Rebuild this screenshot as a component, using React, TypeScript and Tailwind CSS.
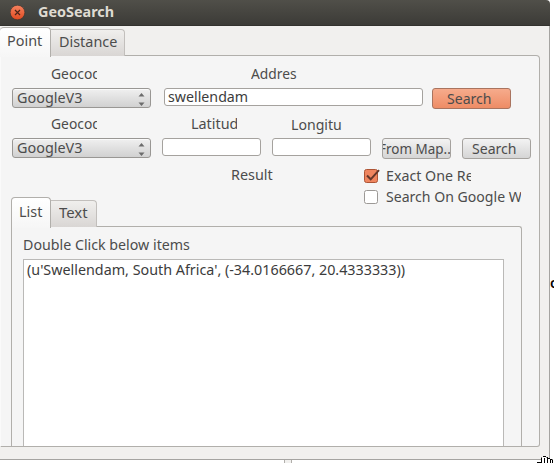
import { useLayoutEffect, useRef, useState, type ReactNode } from "react";

/** Single line of text condensed or stretched to a fixed advance width. */
function Label({ children, width, className = "" }: { children: string; width: number; className?: string }) {
  const ref = useRef<HTMLSpanElement>(null);
  const [scale, setScale] = useState(1);
  useLayoutEffect(() => {
    if (ref.current) setScale(width / ref.current.offsetWidth);
  }, [width]);
  return (
    <div className={`h-5 shrink-0 overflow-hidden whitespace-nowrap text-left leading-5 ${className}`}>
      <span ref={ref} className="inline-block origin-left" style={{ transform: `scaleX(${scale})` }}>
        {children}
      </span>
    </div>
  );
}

function Combo() {
  return (
    <div className="flex h-[20px] w-[139px] shrink-0 items-center justify-between rounded-[3px] border border-[#999794] bg-linear-to-b from-[#f0f0f0] to-[#d1d1d1] pr-[5px] pl-1 shadow-[inset_0_1px_0_#fafafa]">
      <Label width={65} className="w-[68px]">GoogleV3</Label>
      <svg width="7" height="13" viewBox="0 0 7 13" className="mt-[3px] fill-[#6c6c6c]">
        <path d="M3.5 0 6.5 3.5H.5zM.5 9.5h6l-3 3.5z" />
      </svg>
    </div>
  );
}

function Field({ className, children }: { className: string; children?: ReactNode }) {
  return (
    <div className={`flex h-[18px] shrink-0 items-center rounded-[3px] border border-[#a5a29e] bg-white pl-[3px] text-[#3c3c3c] ${className}`}>
      {children}
    </div>
  );
}

function Button({ className, children }: { className: string; children: ReactNode }) {
  return (
    <div className={`flex h-[21px] shrink-0 items-center overflow-hidden rounded-[3px] border bg-linear-to-b ${className}`}>
      {children}
    </div>
  );
}

export default function App() {
  return (
    <div className="flex h-[463px] w-[554px] overflow-hidden bg-white font-['Noto_Sans','Open_Sans',sans-serif] text-[14.4px] text-[#4c4c4c]">
      <div className="flex w-[550px] flex-col">
        <header className="flex h-[26px] shrink-0 items-center rounded-tr-[4px] border-b border-[#33322e] bg-linear-to-b from-[#504f49] to-[#3c3b37] pl-[10px]">
          <svg width="16" height="16" viewBox="0 0 16 16" className="mt-px">
            <defs>
              <linearGradient id="close" x2="0" y2="1">
                <stop stopColor="#f68360" />
                <stop offset="1" stopColor="#df4a20" />
              </linearGradient>
            </defs>
            <circle cx="7.5" cy="7.5" r="7.3" fill="url(#close)" stroke="#33302c" strokeWidth=".6" />
            <path d="m5 5 5 5m0-5-5 5" stroke="#4b2418" strokeWidth="1.2" />
          </svg>
          <Label width={76} className="-mt-px ml-3 w-20 font-bold text-[#dfdbd2]">GeoSearch</Label>
        </header>

        <main className="flex h-[434px] shrink-0 flex-col border-r border-b border-[#a5a4a1] bg-[#f1f0ee]">
          <nav className="z-10 flex h-[30px] shrink-0 items-end">
            <div className="-mb-px h-[30px] w-[51px] rounded-t-[4px] border-t border-r border-[#b1afab] bg-linear-to-b from-white to-[#f6f6f6] pt-[3px] pl-[7px]">
              <Label width={35} className="w-9">Point</Label>
            </div>
            <div className="h-[27px] w-[74px] rounded-tr-[4px] border-t border-r border-[#c2bfbc] bg-linear-to-b from-[#f0efed] to-[#d9d6d4] pt-[2px] pl-2">
              <Label width={58} className="w-[60px]">Distance</Label>
            </div>
          </nav>

          <section className="-mt-px flex h-[392px] w-[540px] shrink-0 flex-col overflow-hidden rounded-tr-[4px] rounded-br-[3px] border-t border-r border-b border-l border-[#b1afab] border-l-[#fafafa] bg-[#f5f5f5] pl-[10px]">
            <div className="flex h-8 shrink-0 pt-2 pl-10">
              <Label width={50} className="w-[46px]">Geocod</Label>
              <Label width={46} className="ml-[154px] w-[46px]">Addres</Label>
            </div>
            <div className="flex h-[27px] shrink-0 items-start pl-px">
              <Combo />
              <Field className="ml-[13px] w-[259px]">
                <Label width={80} className="w-[84px]">swellendam</Label>
              </Field>
              <Button className="ml-[9px] w-[79px] border-[#a9745f] from-[#f6ab8c] to-[#ee8c65] pl-[14px]">
                <Label width={45} className="w-[46px]">Search</Label>
              </Button>
            </div>
            <div className="flex h-[23px] shrink-0 pl-10">
              <Label width={50} className="-mt-px w-[46px]">Geocod</Label>
              <Label width={47} className="-mt-px ml-[94px] w-[46px]">Latitud</Label>
              <Label width={51} className="ml-[54px] w-[51px]">Longitu</Label>
            </div>
            <div className="flex h-[27px] shrink-0 items-start pl-px">
              <Combo />
              <Field className="ml-[11px] w-[99px]" />
              <Field className="ml-[11px] w-[99px]" />
              <Button className="ml-[11px] w-[69px] border-[#a5a29e] from-[#f3f3f3] to-[#d5d5d5]">
                <Label width={72} className="-ml-1 w-[75px]">From Map..</Label>
              </Button>
              <Button className="ml-[11px] w-[69px] border-[#a5a29e] from-[#f3f3f3] to-[#d5d5d5] pl-[9px]">
                <Label width={45} className="w-[46px]">Search</Label>
              </Button>
            </div>

            <div className="flex h-8 shrink-0">
              <Label width={42} className="ml-[220px] w-[43px]">Result</Label>
              <div className="ml-[90px] flex flex-col gap-px pt-px">
                <div className="flex h-5 items-center">
                  <svg width="16" height="15" viewBox="0 0 16 15">
                    <rect x=".5" y=".5" width="13" height="13" rx="2" fill="#ef855f" stroke="#ad5435" />
                    <path d="m3 6.5 3.7 3.8L15 1.2" fill="none" stroke="#65372a" strokeWidth="2" />
                  </svg>
                  <Label width={94} className="ml-[6px] w-[85px]">Exact One Res</Label>
                </div>
                <div className="flex h-5 items-center">
                  <svg width="16" height="15" viewBox="0 0 16 15">
                    <rect x=".5" y=".5" width="13" height="13" rx="2" fill="#fff" stroke="#9c9996" />
                  </svg>
                  <Label width={136} className="ml-[6px] w-[135px]">Search On Google W</Label>
                </div>
              </div>
            </div>

            <nav className="z-10 -mt-px flex h-[31px] shrink-0 items-end">
              <div className="-mb-px h-[31px] w-[40px] rounded-t-[4px] border-t border-r border-l border-[#b1afab] bg-linear-to-b from-white to-[#f6f6f6] pt-[4px] pl-[7px]">
                <Label width={23} className="w-6">List</Label>
              </div>
              <div className="h-[27px] w-[46px] rounded-tr-[4px] border-t border-r border-[#c2bfbc] bg-linear-to-b from-[#f0efed] to-[#d9d6d4] pt-[2px] pl-2">
                <Label width={29} className="w-[30px]">Text</Label>
              </div>
            </nav>
            <section className="-mt-px flex min-h-0 w-[511px] flex-1 flex-col rounded-tr-[3px] border-t border-r border-l border-[#b1afab] pl-[11px]">
              <Label width={167} className="mt-[8px] w-[170px]">Double Click below items</Label>
              <div className="mt-1 w-[481px] flex-1 border-t border-r border-l border-[#bab9b7] bg-white pl-[3px] text-[#3c3c3c]">
                <Label width={378} className="w-[382px]">(u'Swellendam, South Africa', (-34.0166667, 20.4333333))</Label>
              </div>
            </section>
          </section>
        </main>
        <div className="ml-[284px] h-[3px] w-2 border-x border-[#b1afab] bg-[#f1f0ee]" />
      </div>

      {/* Edge of the underlying map, with the hand pointer */}
      <aside className="relative w-1 bg-white">
        <span className="absolute top-[273px] left-0 w-1 overflow-hidden text-[14px] leading-5 font-semibold text-black">o</span>
        <svg className="absolute top-[456px] -left-[13px]" width="17" height="7" viewBox="0 0 17 7">
          <path d="M4.5 7V1.5H6v-1h3v1h2v1h2v1h2V7z" fill="#fff" />
          <path d="M0 6.5h4M4.5 7V1.5M6 .5h3M7.5 2v5M9.5 1.5h1.500M10.5 2v5M11 2.500h2M13.500 3v4M14 3.500h1.500M15.500 4v3" fill="none" stroke="#000" />
        </svg>
      </aside>
    </div>
  );
}
